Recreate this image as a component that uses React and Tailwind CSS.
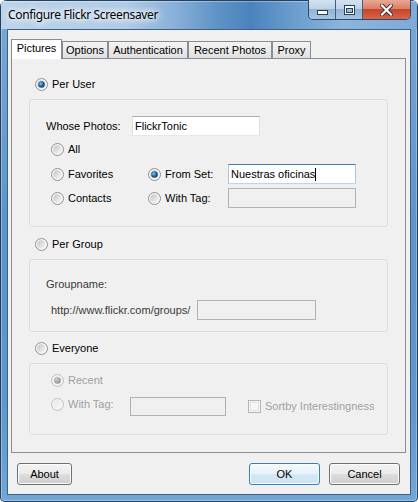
import React, { useId } from "react";

// Win7-style option button, drawn at 13x13
function Radio({ checked = false, disabled = false }) {
  const id = useId().replace(/:/g, "");
  return (
    <svg width="13" height="13" viewBox="0 0 13 13" className="block shrink-0">
      <defs>
        <linearGradient id={`${id}b`} x1="0" y1="0" x2="1" y2="1">
          <stop offset="0" stopColor={disabled ? "#e6e6e6" : "#c2c2c2"} />
          <stop offset="1" stopColor={disabled ? "#fafafa" : "#fbfbfb"} />
        </linearGradient>
        <radialGradient id={`${id}d`} cx="0.38" cy="0.38" r="0.7">
          <stop offset="0" stopColor={disabled ? "#d6d6d6" : "#8fcdf2"} />
          <stop offset="0.5" stopColor={disabled ? "#a9a9a9" : "#1f68a1"} />
          <stop offset="1" stopColor={disabled ? "#8f8f8f" : "#0b3a61"} />
        </radialGradient>
      </defs>
      <circle
        cx="6.5"
        cy="6.5"
        r="6"
        fill={disabled ? "#f4f4f4" : "#f7f7f7"}
        stroke={disabled ? "#bdbdbd" : "#8e8f8f"}
      />
      <circle cx="6.5" cy="6.5" r="4.3" fill={`url(#${id}b)`} />
      {checked && <circle cx="6.5" cy="6.5" r="3.3" fill={`url(#${id}d)`} />}
    </svg>
  );
}

function CheckBox() {
  return (
    <svg width="13" height="13" viewBox="0 0 13 13" className="block shrink-0">
      <rect x="0.5" y="0.5" width="12" height="12" fill="#f4f4f4" stroke="#b4b4b4" />
      <rect x="2.5" y="2.5" width="8" height="8" fill="#f7f7f7" stroke="#e2e2e2" />
    </svg>
  );
}

function Option({ checked, disabled, label, className = "" }) {
  return (
    <div className={`flex items-center gap-[4px] h-[14px] ${className}`}>
      <Radio checked={checked} disabled={disabled} />
      <span className={`leading-[13px] whitespace-nowrap ${disabled ? "text-[#a0a0a0]" : "text-black"}`}>
        {label}
      </span>
    </div>
  );
}

function Tab({ className, children }) {
  return (
    <div
      className={`h-[17px] border border-b-0 border-[#898c95] bg-[linear-gradient(180deg,#f3f3f3_0%,#ebebeb_50%,#e0e0e0_100%)] text-center leading-[13px] pt-[2px] whitespace-nowrap ${className}`}
    >
      {children}
    </div>
  );
}

function Button({ className = "", primary = false, children }) {
  return (
    <div
      className={`h-[22px] rounded-[3px] border flex items-center justify-center leading-[13px] ${
        primary
          ? "border-[#3c7fb1] bg-[linear-gradient(180deg,#f4f9fd_0%,#e7f2fa_50%,#d6e9f6_50%,#cbe3f4_100%)] shadow-[inset_0_0_0_1px_#f8fcff]"
          : "border-[#707070] bg-[linear-gradient(180deg,#f2f2f2_0%,#ebebeb_50%,#dddddd_50%,#cfcfcf_100%)] shadow-[inset_0_0_0_1px_#fcfcfc]"
      } ${className}`}
    >
      {children}
    </div>
  );
}

function TitleBar() {
  return (
    <div className="-mx-[7px] h-[29px] px-[7px] flex justify-between items-start bg-[linear-gradient(90deg,#bcd4eb_0%,#b0cbe6_30%,#88b0d8_42%,#5f93c6_52%,#4a83bc_60%,#6a9dcd_70%,#8cb5dc_82%,#7eaad5_100%)] shadow-[inset_0_1px_0_#24405e,inset_1px_0_0_#24405e,inset_-1px_0_0_#24405e,inset_0_2px_0_rgba(255,255,255,0.35)]">
      <span className="pl-[1px] mt-[7px] leading-[16px] text-[12px] text-black font-['Noto_Sans',sans-serif] tracking-[-0.35px] [text-shadow:0_0_8px_#fff,0_0_8px_#fff,0_0_5px_rgba(255,255,255,0.9)]">
        Configure Flickr Screensaver
      </span>
      <div className="flex h-[20px] rounded-b-[5px] border border-t-0 border-[#2d4a69] overflow-hidden">
        <div className="w-[27px] border-r border-[#3d5f82] bg-[linear-gradient(180deg,#d3e2f1_0%,#bdd2e7_45%,#93b4d5_50%,#a6c4e2_100%)] flex justify-center pt-[10px]">
          <svg width="11" height="5" viewBox="0 0 11 5">
            <rect x="0.5" y="0.5" width="10" height="4" fill="#fff" stroke="#2b3e52" />
          </svg>
        </div>
        <div className="w-[27px] border-r border-[#3d5f82] bg-[linear-gradient(180deg,#d3e2f1_0%,#bdd2e7_45%,#93b4d5_50%,#a6c4e2_100%)] flex justify-center pt-[5px]">
          <svg width="11" height="10" viewBox="0 0 11 10">
            <rect x="0.5" y="0.5" width="10" height="9" fill="#fff" stroke="#2b3e52" />
            <rect x="2.5" y="3.5" width="6" height="4" fill="#9fbfdd" stroke="#2b3e52" />
          </svg>
        </div>
        <div className="w-[47px] bg-[linear-gradient(180deg,#e9a995_0%,#dc7f66_45%,#c7452b_50%,#d8634a_100%)] flex justify-center pt-[4px]">
          <svg width="13" height="12" viewBox="0 0 13 12">
            <path d="M2 1.5 L11 10.5 M11 1.5 L2 10.5" stroke="#3b2a2a" strokeWidth="4" strokeLinecap="square" />
            <path d="M2 1.5 L11 10.5 M11 1.5 L2 10.5" stroke="#fff" strokeWidth="2.2" strokeLinecap="square" />
          </svg>
        </div>
      </div>
    </div>
  );
}

const boxNormal = "border border-[#abadb3] border-x-[#dbdfe6] border-b-[#e3e9ef] bg-white";
const boxFocused = "border border-[#3d7bad] border-x-[#a4c9e3] border-b-[#b7d9ed] bg-white";
const boxDisabled = "border border-[#adb2b5] bg-[#f0f0f0]";

export default function App() {
  return (
    <div className="w-[418px] h-[502px] flex flex-col px-[7px] pb-[7px] rounded-t-[7px] rounded-b-[5px] overflow-hidden bg-[linear-gradient(180deg,#7aa8d4_0%,#5d95c9_45%,#5e97cb_80%,#72a6d5_100%)] shadow-[inset_0_0_0_1px_#24405e,inset_0_0_0_2px_rgba(255,255,255,0.3)] font-['Liberation_Sans',Arial,sans-serif] text-[11px] text-black">
      <TitleBar />

      <div className="flex-1 flex flex-col border border-[#3d6186] bg-[#f0f0f0]">
        {/* tab control */}
        <div className="ml-[3px] mr-[4px] mt-[9px] flex flex-col">
          <div className="flex items-end h-[19px]">
            <div className="relative z-10 -mb-px w-[51px] h-[20px] border border-b-0 border-[#898c95] bg-white text-center leading-[13px] pt-[2px]">
              Pictures
            </div>
            <Tab className="w-[46px]">Options</Tab>
            <Tab className="w-[80px]">Authentication</Tab>
            <Tab className="w-[84px]">Recent Photos</Tab>
            <Tab className="w-[39px]">Proxy</Tab>
          </div>

          <div className="h-[395px] border border-[#898c95] bg-[#f0f0f0] flex flex-col px-[17px]">
            <Option checked label="Per User" className="mt-[18px] pl-[6px]" />

            <div className="mt-[8px] h-[128px] rounded-[3px] border border-[#d5dfe5] flex flex-col">
              <div className="mt-[16px] h-[20px] flex items-center pl-[16px]">
                <span className="w-[86px] leading-[13px]">Whose Photos:</span>
                <div className={`w-[128px] h-[20px] ${boxNormal} pl-[2px] flex items-center leading-[13px]`}>
                  FlickrTonic
                </div>
              </div>
              <Option label="All" className="mt-[6px] pl-[21px]" />
              <div className="mt-[8px] h-[20px] flex items-center pl-[21px]">
                <Option label="Favorites" className="w-[97px]" />
                <Option checked label="From Set:" className="w-[80px]" />
                <div className={`w-[128px] h-[20px] ${boxFocused} pl-[2px] flex items-center leading-[13px]`}>
                  Nuestras oficinas
                  <span className="w-px h-[13px] bg-black" />
                </div>
              </div>
              <div className="mt-[4px] h-[20px] flex items-center pl-[21px]">
                <Option label="Contacts" className="w-[97px]" />
                <Option label="With Tag:" className="w-[80px]" />
                <div className={`w-[128px] h-[20px] ${boxDisabled}`} />
              </div>
            </div>

            <Option label="Per Group" className="mt-[10px] pl-[6px]" />

            <div className="mt-[8px] h-[73px] rounded-[3px] border border-[#d5dfe5] flex flex-col">
              <div className="mt-[18px] pl-[16px] h-[13px] leading-[13px] text-[#3a3a3a]">Groupname:</div>
              <div className="mt-[9px] h-[20px] flex items-center pl-[21px]">
                <span className="w-[146px] leading-[13px] text-[#3a3a3a] whitespace-nowrap">
                  http://www.flickr.com/groups/
                </span>
                <div className={`w-[119px] h-[20px] ${boxDisabled}`} />
              </div>
            </div>

            <Option label="Everyone" className="mt-[9px] pl-[6px]" />

            <div className="mt-[8px] h-[72px] rounded-[3px] border border-[#d5dfe5] flex flex-col">
              <Option checked disabled label="Recent" className="mt-[9px] pl-[21px]" />
              <div className="mt-[10px] h-[19px] flex items-start pl-[21px]">
                <Option disabled label="With Tag:" className="w-[79px]" />
                <div className={`w-[96px] h-[19px] ${boxDisabled}`} />
                <div className="ml-[22px] self-center flex items-center gap-[4px]">
                  <CheckBox />
                  <span className="leading-[13px] text-[#a0a0a0] whitespace-nowrap">Sortby Interestingness</span>
                </div>
              </div>
            </div>
          </div>
        </div>

        {/* dialog buttons */}
        <div className="mt-[10px] flex pl-[9px] pr-[10px]">
          <Button className="w-[55px]">About</Button>
          <Button primary className="ml-auto w-[71px]">OK</Button>
          <Button className="ml-[9px] w-[71px]">Cancel</Button>
        </div>
      </div>
    </div>
  );
}
